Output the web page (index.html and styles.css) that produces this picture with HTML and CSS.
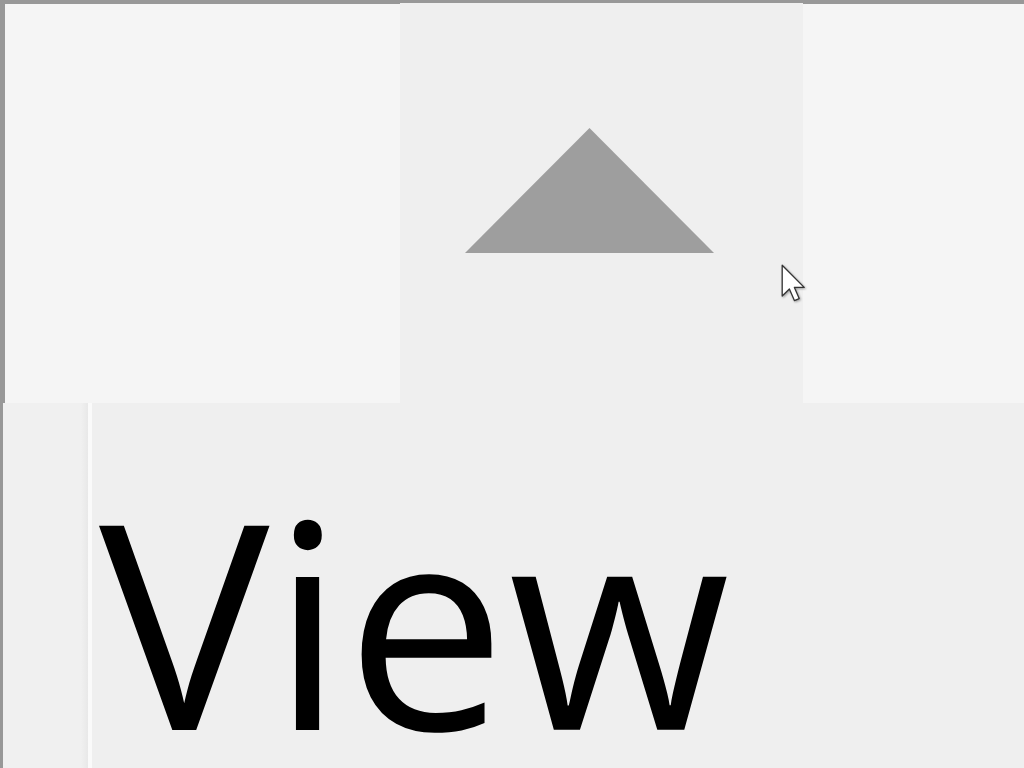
FILE: index.html
```html
<!DOCTYPE html>
<html>
<head>
<meta charset="utf-8">
<link rel="stylesheet" href="styles.css">
</head>
<body>
<div class="screen">
  <div class="top-row">
    <div class="panel side left"></div>
    <div class="panel middle">
      <svg class="arrow-up" width="250" height="126" viewBox="0 0 250 126">
        <polygon points="0,125 124.5,0 249,125" fill="#9e9e9e"/>
      </svg>
    </div>
    <div class="panel side right"></div>
  </div>
  <div class="bottom-row">
    <div class="gutter"></div>
    <div class="divider"></div>
    <div class="content">
      <span class="title">View</span>
    </div>
  </div>
  <svg class="cursor" width="28" height="40" viewBox="0 0 14 20">
    <path d="M0.6,0.6 L0.6,16 L4.2,12.5 L6.7,18.3 L9.1,17.3 L6.7,11.7 L11.6,11.7 Z" fill="#fff" stroke="#333" stroke-width="0.65" stroke-linejoin="round"/>
  </svg>
</div>
</body>
</html>
```
FILE: styles.css
```css
html, body {
  margin: 0;
  padding: 0;
}
body {
  background: #989898;
  width: 1024px;
  height: 768px;
  overflow: hidden;
}
.screen {
  position: relative;
  width: 1024px;
  height: 768px;
  display: flex;
  flex-direction: column;
}
.top-row {
  display: flex;
  height: 400px;
  margin-top: 3px;
  padding-left: 5px;
}
.panel.side {
  margin-top: 1px;
  background: #f5f5f5;
}
.panel.left {
  width: 395px;
}
.panel.right {
  flex: 1;
}
.panel.middle {
  width: 403px;
  background: #efefef;
  padding-top: 125px;
  padding-left: 65px;
  box-sizing: border-box;
}
.arrow-up {
  display: block;
}
.bottom-row {
  flex: 1;
  display: flex;
  padding-left: 3px;
}
.gutter {
  width: 85px;
  background: linear-gradient(to right, #f0f0f0 0, #f0f0f0 78px, #e8e8e8 85px);
}
.divider {
  width: 4px;
  background: #fafafa;
}
.content {
  flex: 1;
  background: #efefef;
}
.title {
  display: block;
  font-family: "Open Sans", "Noto Sans", sans-serif;
  font-size: 286px;
  line-height: 1;
  color: #000;
  margin-top: 73px;
  margin-left: 7px;
  letter-spacing: 2px;
}
.cursor {
  position: absolute;
  left: 781px;
  top: 264px;
  filter: drop-shadow(1px 1px 1px rgba(0, 0, 0, 0.35));
}
```
